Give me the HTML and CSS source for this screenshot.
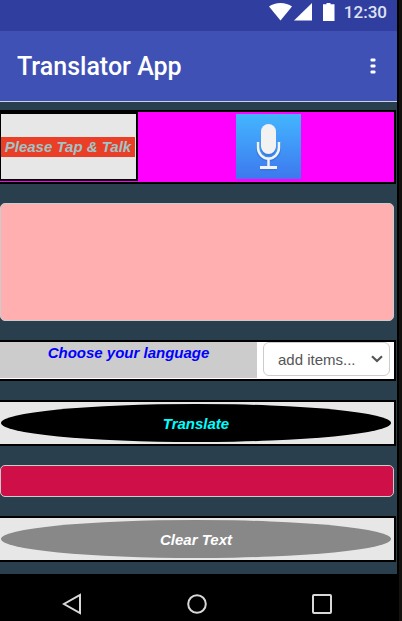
FILE: index.html
```html
<!DOCTYPE html>
<html lang="en">
<head>
    <meta charset="UTF-8">
    <meta name="viewport" content="width=device-width, initial-scale=1.0">
    <title>Translator App</title>
    <link rel="stylesheet" href="styles.css">
</head>
<body>

    <div class="phone">
        <div class="status-bar">
            <svg class="status-icons" width="68" height="22" viewBox="0 0 68 22" fill="#fff">
                <path d="M11.500 20.500L0 6.500C6 1.800 17 1.800 23 6.500Z"/>
                <path d="M43 3V20.500H25Z"/>
                <path d="M54 4.200h3.500V3h4v1.200H65.500V21H54Z"/>
            </svg>
            <span class="time">12:30</span>
        </div>

        <header class="title-bar">
            <h1>Translator App</h1>
            <button class="menu" aria-label="Menu">
                <svg width="6" height="16" viewBox="0 0 6 16" fill="#fff">
                    <rect x="0.500" y="0.500" width="5" height="3" rx="1"/>
                    <rect x="0.500" y="6.500" width="5" height="3" rx="1"/>
                    <rect x="0.500" y="12.500" width="5" height="3" rx="1"/>
                </svg>
            </button>
        </header>

        <main class="screen">
            <div class="row talk">
                <div class="talk-label"><span>Please Tap &amp; Talk</span></div>
                <button class="mic" aria-label="Tap and talk">
                    <svg width="65" height="65" viewBox="0 0 65 65">
                        <defs>
                            <linearGradient id="sky" x1="0" y1="0" x2="0" y2="1">
                                <stop offset="0" stop-color="#43b6ff"/>
                                <stop offset="1" stop-color="#3d78ee"/>
                            </linearGradient>
                        </defs>
                        <rect width="65" height="65" fill="url(#sky)"/>
                        <g transform="translate(0 1)" fill="none" stroke="#2c62c4" stroke-opacity="0.4" stroke-width="3">
                            <path d="M21.500 28v6a11 11 0 0 0 22 0v-6M32.500 45v8M24 54h17"/>
                            <rect x="26.500" y="11.500" width="12" height="28" rx="6"/>
                        </g>
                        <path d="M22 28v5.500a10.500 11 0 0 0 21 0V28M32.500 44v9" fill="none" stroke="#f2f2f2" stroke-width="2.500"/>
                        <path d="M24 53.500h17" stroke="#f2f2f2" stroke-width="3"/>
                        <rect x="25" y="10" width="15" height="30" rx="7.500" fill="#f2f2f2"/>
                    </svg>
                </button>
            </div>

            <textarea class="text-box source" aria-label="Text to translate"></textarea>

            <div class="row language">
                <label for="language">Choose your language</label>
                <div class="select-wrap">
                    <select id="language">
                        <option>add items...</option>
                    </select>
                    <svg class="chevron" width="12" height="8" viewBox="0 0 12 8">
                        <path d="M1 1.200L6 6L11 1.200" fill="none" stroke="#555" stroke-width="2.200"/>
                    </svg>
                </div>
            </div>

            <div class="row action">
                <button class="oval translate">Translate</button>
            </div>

            <textarea class="text-box result" aria-label="Translated text" readonly></textarea>

            <div class="row action">
                <button class="oval clear">Clear Text</button>
            </div>
        </main>

        <nav class="nav-bar">
            <button aria-label="Back">
                <svg width="20" height="22" viewBox="0 0 20 22">
                    <path d="M18 2V20L2 11Z"/>
                </svg>
            </button>
            <button aria-label="Home">
                <svg width="20" height="22" viewBox="0 0 20 22">
                    <circle cx="10" cy="11" r="8.800"/>
                </svg>
            </button>
            <button aria-label="Recent apps">
                <svg width="20" height="22" viewBox="0 0 20 22">
                    <rect x="1" y="2" width="18" height="18" rx="1"/>
                </svg>
            </button>
        </nav>
    </div>

</body>
</html>
```
FILE: styles.css
```css
* {
    box-sizing: border-box;
}

body {
    margin: 0;
    background-color: #14120e;
    font-family: "Liberation Sans", Arial, sans-serif;
    font-size: 15px;
}

button {
    padding: 0;
    border: none;
    background: none;
    font: inherit;
    cursor: pointer;
}

svg {
    display: block;
}

.phone {
    display: flex;
    flex-direction: column;
    min-height: 100vh;
    margin-right: 3px;
    border-right: 2px solid #000;
    background-color: #293f4e;
}

/* Top bars */
.status-bar {
    display: flex;
    justify-content: flex-end;
    gap: 7px;
    height: 31px;
    padding-right: 10px;
    background-color: #303f9f;
    color: #dfe2f3;
    font-family: Roboto, sans-serif;
    font-size: 17px;
    font-weight: 500;
    line-height: 25px;
}

.title-bar {
    display: flex;
    align-items: center;
    justify-content: space-between;
    height: 71px;
    padding: 0 21px 0 17px;
    border-bottom: 1px solid #d0d3dc;
    background-color: #3f51b5;
    color: #fff;
}

.title-bar h1 {
    margin: 0;
    font-family: Roboto, sans-serif;
    font-size: 25px;
    font-weight: 500;
}

/* App screen */
.screen {
    display: flex;
    flex-direction: column;
    gap: 19px;
    padding: 8px 1px 12px 0;
}

.row {
    display: flex;
    border: 2px solid #000;
    border-left: none;
}

.talk {
    height: 74px;
    background-color: #f0f;
}

.talk-label {
    display: flex;
    flex: 0 0 138px;
    align-items: center;
    margin-bottom: 1px;
    padding-right: 1px;
    border: 2px solid #000;
    border-left-width: 1px;
    background-color: #e7e7e7;
}

.talk-label span {
    flex: 1;
    background-color: #ea3f26;
    color: #9fc5c8;
    font-style: italic;
    font-weight: bold;
    line-height: 20px;
    text-align: center;
    white-space: nowrap;
}

.mic {
    display: flex;
    flex: 1;
    align-items: center;
    justify-content: center;
    padding: 0 0 1px 4px;
}

.text-box {
    display: block;
    margin: 0 2px 0 0;
    padding: 8px;
    border: 1px solid #ccc;
    border-radius: 5px;
    font: inherit;
    resize: none;
}

.source {
    height: 118px;
    background-color: #ffafaf;
}

.result {
    height: 32px;
    background-color: #cf0f47;
    color: #fff;
}

.language {
    height: 41px;
    background-color: #fff;
}

.language label {
    flex: 1;
    margin-bottom: 1px;
    background-color: #ccc;
    color: #00f;
    font-style: italic;
    font-weight: bold;
    line-height: 22px;
    text-align: center;
}

.select-wrap {
    position: relative;
    width: 127px;
    height: 34px;
    margin: 0 4px 0 6px;
}

.select-wrap select {
    width: 100%;
    height: 100%;
    padding: 0 24px 0 14px;
    appearance: none;
    border: 1px solid #ccc;
    border-radius: 6px;
    background-color: #fff;
    color: #555;
    font: inherit;
}

.chevron {
    position: absolute;
    top: 13px;
    right: 7px;
    pointer-events: none;
}

.action {
    height: 46px;
    padding: 2px 3px 2px 1px;
    background-color: #e7e7e7;
}

.oval {
    flex: 1;
    border-radius: 50%;
    font-style: italic;
    font-weight: bold;
}

.translate {
    background-color: #000;
    color: #0ff;
}

.clear {
    background-color: #888;
    color: #fff;
}

/* Bottom bar */
.nav-bar {
    display: flex;
    flex: 1;
    align-items: flex-start;
    padding: 19px 13px 6px 9px;
    background-color: #000;
}

.nav-bar button {
    display: flex;
    flex: 1;
    justify-content: center;
}

.nav-bar svg {
    fill: none;
    stroke: #d8d8d8;
    stroke-width: 2;
}
```
